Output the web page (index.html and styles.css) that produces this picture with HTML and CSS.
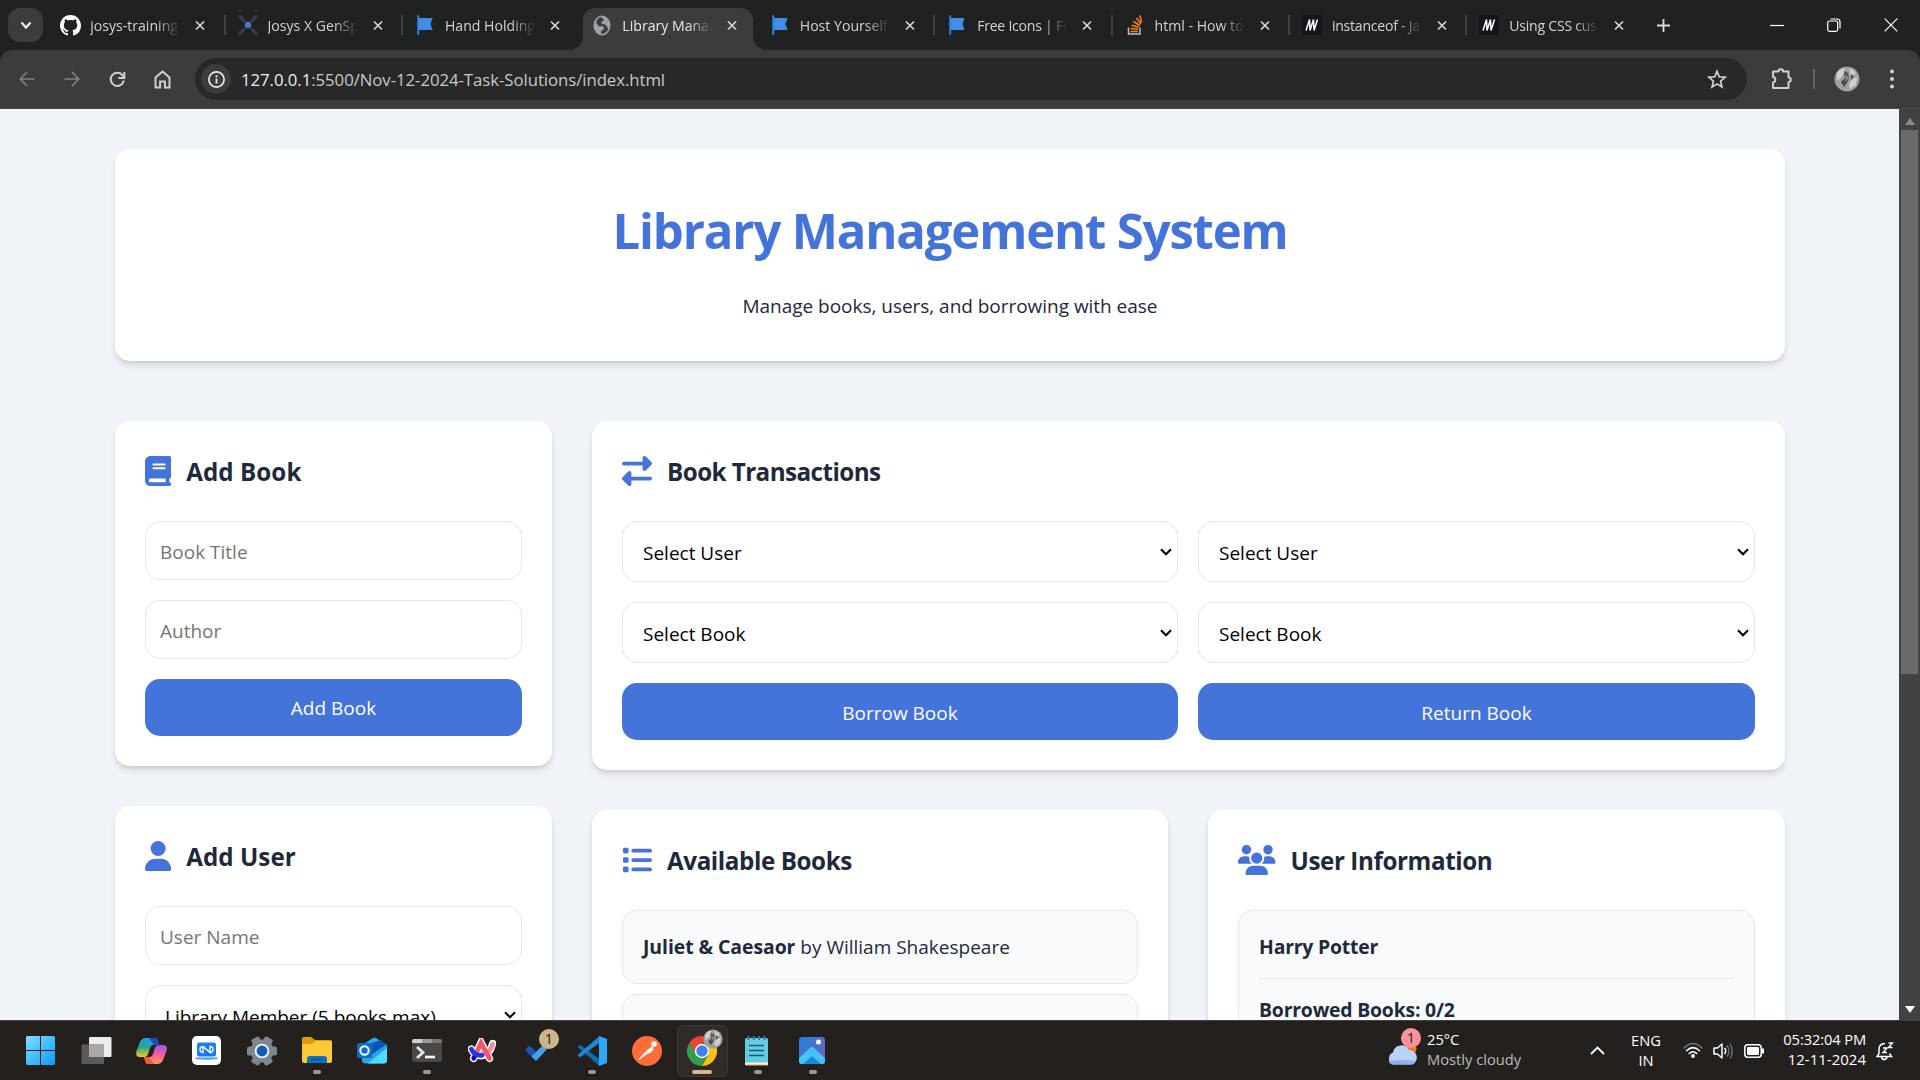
FILE: index.html
```
<!DOCTYPE html>
<html lang="en">
<head>
<meta charset="utf-8">
<title>Library Management System</title>
<link rel="stylesheet" href="styles.css">
</head>
<body>
<svg class="defs" width="0" height="0" aria-hidden="true">
  <defs>
    <symbol id="close" viewBox="0 0 10 10"><path d="M1 1l8 8M9 1l-8 8" fill="none" stroke="#d6d6d6" stroke-width="1.7"/></symbol>
    <symbol id="flag" viewBox="0 0 16 20"><path d="M1.2 1v18" stroke="#2f7fe0" stroke-width="2" stroke-linecap="round"/><path d="M2 3h13.5l-2 6 2 6H2z" fill="#3f8ee4"/></symbol>
    <symbol id="mdn" viewBox="0 0 20 20"><path d="M0 0h20v20H0z" fill="#14141c"/><path d="M4 15.5L7.500 4.500M8 15.500L11.500 4.500M12 15.500L15.500 4.500M7.500 4.500L8 15.500M11.500 4.500L12 15.500" stroke="#fff" stroke-width="1.500" fill="none"/></symbol>
    <symbol id="chev" viewBox="0 0 12 8"><path d="M1 1.200l5 5 5-5" fill="none" stroke="#000" stroke-width="2.100"/></symbol>
    <symbol id="face" viewBox="0 0 26 26"><circle cx="13" cy="13" r="12.500" fill="#a0a0a0"/><path d="M3 7q5-6 8-4l-3 8-5 4zM15 3q5 0 7 5l-5 1zM18 13l5-2-1 8-6 4-1-5z" fill="#cfcfcf"/><path d="M10 5l4 2 1 5-2 5-3 4-3-5 4-4zM17 8l3 3-3 3z" fill="#4a4a4a"/><path d="M12 8l3 4-4 4z" fill="#888"/></symbol>
  </defs>
</svg>

<header class="tabstrip">
  <button class="tab-search"><svg width="12" height="9" viewBox="0 0 12 9"><path d="M1.500 1.500L6 6.500l4.500-5" fill="none" stroke="#eee" stroke-width="2.200"/></svg></button>
  <div class="tab"><span class="fav"><svg width="21" height="21" viewBox="0 0 16 16"><path fill="#fff" d="M8 0C3.580 0 0 3.580 0 8c0 3.540 2.290 6.530 5.470 7.590.4.070.55-.17.55-.38 0-.19-.01-.82-.01-1.490-2.010.37-2.530-.49-2.690-.94-.09-.23-.48-.94-.82-1.130-.28-.15-.68-.52-.01-.53.63-.01 1.080.58 1.230.82.72 1.210 1.870.87 2.330.66.07-.52.28-.87.51-1.070-1.780-.2-3.640-.89-3.640-3.950 0-.87.31-1.590.82-2.150-.08-.2-.36-1.020.08-2.120 0 0 .67-.21 2.200.82.64-.18 1.320-.27 2-.27s1.360.09 2 .27c1.530-1.040 2.200-.82 2.200-.82.44 1.100.16 1.920.08 2.120.51.56.82 1.270.82 2.150 0 3.070-1.870 3.750-3.650 3.950.29.25.54.73.54 1.480 0 1.070-.01 1.930-.01 2.200 0 .21.15.46.55.38A8.010 8.010 0 0016 8c0-4.420-3.580-8-8-8z"/></svg></span><span class="tab-title">josys-training</span><svg class="x"><use href="#close"/></svg></div>
  <div class="tab sep"><span class="fav"><svg width="20" height="22" viewBox="0 0 20 22"><g stroke="#353b49" stroke-width="3.400" stroke-linecap="round"><path d="M2 2.500l4 4.500M18 2.500l-4 4.500M2 19.500l4-4.500M18 19.500l-4-4.500"/></g><circle cx="10" cy="11" r="3.200" fill="#4a78c8"/></svg></span><span class="tab-title">Josys X GenSp</span><svg class="x"><use href="#close"/></svg></div>
  <div class="tab sep"><span class="fav"><svg width="16" height="20"><use href="#flag"/></svg></span><span class="tab-title">Hand Holding</span><svg class="x"><use href="#close"/></svg></div>
  <div class="tab active"><span class="fav"><svg width="18" height="21" viewBox="0 0 20 20" preserveAspectRatio="none"><circle cx="10" cy="10" r="9.500" fill="#9aa2a9"/><path d="M9 2q-5 1-5.500 5.500L7 11l4-.500 1.500 2.500-3.500 2.500.500 2.500q6-1 7.500-5L13.500 9 10 8.500 9 6.500l3.500-1.500z" fill="#3c3c3c"/></svg></span><span class="tab-title">Library Manag</span><svg class="x"><use href="#close"/></svg></div>
  <div class="tab"><span class="fav"><svg width="16" height="20"><use href="#flag"/></svg></span><span class="tab-title">Host Yourself</span><svg class="x"><use href="#close"/></svg></div>
  <div class="tab sep"><span class="fav"><svg width="16" height="20"><use href="#flag"/></svg></span><span class="tab-title tight">Free Icons | Fo</span><svg class="x"><use href="#close"/></svg></div>
  <div class="tab sep"><span class="fav"><svg width="16" height="20" viewBox="0 0 16 20"><path d="M1.500 12.500V19h11.500v-6.500" fill="none" stroke="#bcbcbc" stroke-width="1.500"/><path d="M3.500 16.500h7.500M3.700 13.500l7.400.800M4.600 10.200l7.200 2M6.600 6.500l6.200 4M9.500 3l4.400 6M13 .500l1.500 7" stroke="#f48024" stroke-width="1.600"/></svg></span><span class="tab-title">html - How to</span><svg class="x"><use href="#close"/></svg></div>
  <div class="tab sep"><span class="fav"><svg width="20" height="20"><use href="#mdn"/></svg></span><span class="tab-title tight">instanceof - Ja</span><svg class="x"><use href="#close"/></svg></div>
  <div class="tab sep"><span class="fav"><svg width="20" height="20"><use href="#mdn"/></svg></span><span class="tab-title tight">Using CSS cus</span><svg class="x"><use href="#close"/></svg></div>
  <div class="newtab"><svg width="13" height="13" viewBox="0 0 13 13"><path d="M6.500 0v13M0 6.500h13" stroke="#ddd" stroke-width="1.800"/></svg></div>
  <div class="winctl">
    <span><svg width="14" height="14" viewBox="0 0 14 14"><path d="M0 7.500h14" stroke="#fff" stroke-width="1.200"/></svg></span>
    <span><svg width="14" height="14" viewBox="0 0 14 14"><rect x=".7" y="3" width="10" height="10.300" rx="1.800" fill="none" stroke="#fff" stroke-width="1.200"/><path d="M3.500 1h6.500a3 3 0 0 1 3 3v6.500" fill="none" stroke="#fff" stroke-width="1.200"/></svg></span>
    <span><svg width="14" height="14" viewBox="0 0 14 14"><path d="M.7.7l12.600 12.600M13.300.7L.7 13.300" stroke="#fff" stroke-width="1.200"/></svg></span>
  </div>
</header>

<nav class="toolbar">
  <div class="navbtns">
    <span><svg width="16" height="16" viewBox="0 0 16 16"><path d="M15.500 8H1.500M8 1L1.200 8 8 15" fill="none" stroke="#808080" stroke-width="1.700"/></svg></span>
    <span><svg width="16" height="16" viewBox="0 0 16 16"><path d="M.5 8h14M8 1l6.800 7L8 15" fill="none" stroke="#808080" stroke-width="1.700"/></svg></span>
    <span><svg width="17" height="17" viewBox="0 0 17 17"><path d="M14.800 9.500A6.600 6.600 0 1 1 13.600 4.400L15 6" fill="none" stroke="#d0d0d0" stroke-width="2"/><path d="M15.300 1v6h-6" fill="none" stroke="#d0d0d0" stroke-width="2"/></svg></span>
    <span><svg width="17" height="19" viewBox="0 0 17 19"><path d="M1.500 17.500V7.500l7-6 7 6v10h-4.600v-6H6.100v6z" fill="none" stroke="#d0d0d0" stroke-width="2"/></svg></span>
  </div>
  <div class="omnibox">
    <span class="info"><svg width="17" height="17" viewBox="0 0 17 17"><circle cx="8.500" cy="8.500" r="7.600" fill="none" stroke="#e8e8e8" stroke-width="1.700"/><path d="M8.500 7.500v5M8.500 4.200v2" stroke="#e8e8e8" stroke-width="1.800"/></svg></span>
    <span class="url"><b>127.0.0.1</b>:5500/Nov-12-2024-Task-Solutions/index.html</span>
    <svg width="20" height="20" viewBox="0 0 20 20"><path d="M10 2.300l2.200 5.500 5.800.5-4.400 3.900 1.300 5.700L10 14.900l-4.900 3 1.300-5.700L2 8.300l5.800-.5z" fill="none" stroke="#d4d4d4" stroke-width="1.700"/></svg>
  </div>
  <div class="tools">
    <svg width="22" height="24" viewBox="0 0 22 24"><path d="M2 4.500h5.500a2.300 2.300 0 0 1 4.600 0H17.500v6a2.300 2.300 0 0 1 0 4.600v6H2v-5.500a3 3 0 0 0 0-5.800z" fill="none" stroke="#cfcfcf" stroke-width="2" stroke-linejoin="round"/></svg>
    <i class="bar"></i>
    <svg width="26" height="26"><use href="#face"/></svg>
    <svg class="dots" width="6" height="20" viewBox="0 0 6 20"><g fill="#d4d4d4"><circle cx="3" cy="2.500" r="2"/><circle cx="3" cy="10" r="2"/><circle cx="3" cy="17.500" r="2"/></g></svg>
  </div>
</nav>

<div class="viewport">
  <main class="page">
    <section class="hero">
      <h1>Library Management System</h1>
      <p>Manage books, users, and borrowing with ease</p>
    </section>
    <div class="layout">
      <aside class="sidebar">
        <section class="card">
          <h2><svg width="26.250" height="30" viewBox="0 0 448 512"><path d="M96 0C43 0 0 43 0 96V416c0 53 43 96 96 96H384h32c17.700 0 32-14.300 32-32s-14.300-32-32-32V384c17.700 0 32-14.300 32-32V32c0-17.700-14.300-32-32-32H384 96zm0 384H352v64H96c-17.700 0-32-14.300-32-32s14.300-32 32-32zm32-240c0-8.800 7.200-16 16-16H336c8.800 0 16 7.200 16 16s-7.200 16-16 16H144c-8.800 0-16-7.200-16-16zm16 48H336c8.800 0 16 7.200 16 16s-7.200 16-16 16H144c-8.800 0-16-7.200-16-16s7.200-16 16-16z"/></svg><span>Add Book</span></h2>
          <div class="form">
            <input type="text" placeholder="Book Title">
            <input type="text" placeholder="Author">
            <button class="btn">Add Book</button>
          </div>
        </section>
        <section class="card">
          <h2><svg width="26.250" height="30" viewBox="0 0 448 512"><path d="M224 256A128 128 0 1 0 224 0a128 128 0 1 0 0 256zm-45.700 48C79.800 304 0 383.800 0 482.300C0 498.700 13.300 512 29.700 512H418.300c16.400 0 29.700-13.300 29.700-29.700C448 383.800 368.200 304 269.700 304H178.300z"/></svg><span>Add User</span></h2>
          <div class="form">
            <input type="text" placeholder="User Name">
            <div class="select"><select><option>Library Member (5 books max)</option></select><svg><use href="#chev"/></svg></div>
            <button class="btn">Add User</button>
          </div>
        </section>
      </aside>
      <div class="main">
        <section class="card wide">
          <h2><svg width="30" height="30" viewBox="0 0 512 512"><path d="M32 96l320 0V32c0-12.900 7.800-24.600 19.800-29.600s25.700-2.200 34.900 6.900l96 96c6 6 9.400 14.100 9.400 22.600s-3.400 16.600-9.400 22.600l-96 96c-9.200 9.200-22.900 11.900-34.900 6.900s-19.800-16.600-19.800-29.600V160L32 160c-17.700 0-32-14.300-32-32s14.300-32 32-32zM480 352c17.700 0 32 14.300 32 32s-14.300 32-32 32H160v64c0 12.900-7.800 24.600-19.800 29.600s-25.700 2.200-34.900-6.900l-96-96c-6-6-9.400-14.100-9.400-22.600s3.400-16.600 9.400-22.600l96-96c9.200-9.200 22.900-11.900 34.900-6.900s19.800 16.600 19.800 29.600l0 64H480z"/></svg><span>Book Transactions</span></h2>
          <div class="trans">
            <div class="form">
              <div class="select"><select><option>Select User</option></select><svg><use href="#chev"/></svg></div>
              <div class="select"><select><option>Select Book</option></select><svg><use href="#chev"/></svg></div>
              <button class="btn">Borrow Book</button>
            </div>
            <div class="form">
              <div class="select"><select><option>Select User</option></select><svg><use href="#chev"/></svg></div>
              <div class="select"><select><option>Select Book</option></select><svg><use href="#chev"/></svg></div>
              <button class="btn">Return Book</button>
            </div>
          </div>
        </section>
        <section class="card">
          <h2><svg width="30" height="30" viewBox="0 0 512 512"><rect x="16" y="48" width="96" height="96" rx="24"/><rect x="16" y="208" width="96" height="96" rx="24"/><rect x="16" y="368" width="96" height="96" rx="24"/><rect x="160" y="64" width="352" height="64" rx="32"/><rect x="160" y="224" width="352" height="64" rx="32"/><rect x="160" y="384" width="352" height="64" rx="32"/></svg><span class="mid">Available Books</span></h2>
          <ul class="books">
            <li><strong>Juliet &amp; Caesaor</strong> by William Shakespeare</li>
            <li></li>
          </ul>
        </section>
        <section class="card">
          <h2><svg width="37.500" height="30" viewBox="0 0 640 512"><path d="M144 0a80 80 0 1 1 0 160A80 80 0 1 1 144 0zM512 0a80 80 0 1 1 0 160A80 80 0 1 1 512 0zM0 298.700C0 239.800 47.800 192 106.700 192h42.700c15.900 0 31 3.500 44.600 9.700c-1.300 7.200-1.900 14.700-1.900 22.300c0 38.200 16.800 72.500 43.300 96H21.300C9.600 320 0 310.400 0 298.700zM405.300 320h-.7c26.600-23.500 43.300-57.800 43.300-96c0-7.600-.7-15-1.900-22.300c13.600-6.300 28.700-9.700 44.600-9.700h42.700C592.200 192 640 239.800 640 298.700c0 11.800-9.600 21.300-21.300 21.300H405.300zM224 224a96 96 0 1 1 192 0 96 96 0 1 1-192 0zM128 485.300C128 411.700 187.700 352 261.300 352H378.700C452.300 352 512 411.700 512 485.300c0 14.700-11.900 26.700-26.700 26.700H154.700c-14.700 0-26.700-11.900-26.700-26.700z"/></svg><span class="mid">User Information</span></h2>
          <div class="user">
            <strong>Harry Potter</strong>
            <hr>
            <strong>Borrowed Books: 0/2</strong>
          </div>
        </section>
      </div>
    </div>
  </main>
  <div class="scrollbar">
    <svg width="10" height="8" viewBox="0 0 10 8"><path d="M0 8l5-7 5 7z" fill="#8b8b8b"/></svg>
    <div class="track"><div class="thumb"></div></div>
    <svg width="10" height="8" viewBox="0 0 10 8"><path d="M0 0l5 7 5-7z" fill="#fff"/></svg>
  </div>
</div>

<footer class="taskbar">
  <div class="apps">
    <span class="app"><svg width="29" height="29" viewBox="0 0 29 29"><defs><linearGradient id="w" x1="0" y1="0" x2="1" y2="1" ><stop offset="0" stop-color="#7fe0ff"/><stop offset="1" stop-color="#0a9bfa"/></linearGradient></defs><path d="M1 0h13v14H0V1zM15 0h13l1 1v13H15zM0 15h14v14H1l-1-1zM15 15h14v13l-1 1H15z" fill="url(#w)"/></svg></span>
    <span class="app"><svg width="31" height="29" viewBox="0 0 31 29"><rect x="8" y="1" width="22.500" height="20" rx="1" fill="#ececec"/><rect x=".5" y="8.500" width="22.500" height="19.500" rx="1" fill="#5c5a59"/><path d="M8 8.500h15V21H8z" fill="#a9a8a8"/></svg></span>
    <span class="app"><svg width="31" height="28" viewBox="0 0 31 28"><defs><linearGradient id="c1" x1="0" y1="0" x2="0" y2="1"><stop offset="0" stop-color="#1c9ff0"/><stop offset=".5" stop-color="#2fa58c"/><stop offset="1" stop-color="#f5d11a"/></linearGradient><linearGradient id="c2" x1="0" y1="0" x2="0" y2="1"><stop offset="0" stop-color="#a353e8"/><stop offset=".5" stop-color="#f0609a"/><stop offset="1" stop-color="#fb9b4f"/></linearGradient></defs><path d="M10 1h9q2 0 2.500 2l1.500 5h-6q-2 0-3 3l-2 6q-1 3-4 3H4q-5 0-3.500-6L4 5q1.500-4 6-4z" fill="url(#c1)"/><path d="M13 1h6q2 0 2.500 2l1.500 5h-5z" fill="#1b49c9"/><path d="M21 27h-9q-2 0-2.500-2L8 20h6q2 0 3-3l2-6q1-3 4-3h4q5 0 3.500 6L27 23q-1.500 4-6 4z" fill="url(#c2)"/><path d="M18 27h-6q-2 0-2.500-2L8 20h5z" fill="#f4593c"/></svg></span>
    <span class="app"><svg width="29" height="29" viewBox="0 0 29 29"><rect width="29" height="29" rx="5" fill="#fff"/><rect x="5" y="6.500" width="19" height="14" rx="2" fill="#1a7cf5"/><path d="M3.500 21.500h22V23q-11 1.500-22 0z" fill="#3f9dfb"/><path d="M11 10.500L18 16.500V10.500q3 0 3 3t-3 3L11 10.500q-3 0-3 3t3 3v-6" fill="none" stroke="#fff" stroke-width="1.300"/></svg></span>
    <span class="app"><svg width="30" height="30" viewBox="0 0 30 30"><circle cx="15" cy="15" r="11.500" fill="#7c8691"/><g fill="#7c8691"><rect x="10.500" y="0" width="9" height="30" rx="2" transform="rotate(30 15 15)"/><rect x="10.500" y="0" width="9" height="30" rx="2" transform="rotate(90 15 15)"/><rect x="10.500" y="0" width="9" height="30" rx="2" transform="rotate(150 15 15)"/></g><circle cx="15" cy="15" r="7.300" fill="#f2f2f2"/><circle cx="15" cy="15" r="5.400" fill="#0d5fb5"/></svg></span>
    <span class="app run"><svg width="30" height="27" viewBox="0 0 30 27"><path d="M0 2q0-2 2-2h7l4 3h15q2 0 2 2v6H0z" fill="#dd9b08"/><path d="M0 7h10l3-3h17v20q0 2-2 2H2q-2 0-2-2z" fill="#fcc938"/><path d="M5 26v-4q0-3 3-3h14q3 0 3 3v4z" fill="#0c72c4"/><path d="M9 22.500h12" stroke="#064f92" stroke-width="1.200"/></svg></span>
    <span class="app"><svg width="30" height="27" viewBox="0 0 30 27"><path d="M5 8L16 1q1.500-1 3 0l11 7v15q0 3.500-3.500 3.500H8.500Q5 26.500 5 23z" fill="#2aa3ee"/><path d="M9 8l15-5 5 5-15 10z" fill="#0a55b5"/><path d="M14 24L30 11v12q0 3.500-3.500 3.500H11z" fill="#4fdcf9"/><rect y="6" width="15" height="15" rx="2" fill="#0f6cc9"/><circle cx="7.500" cy="13.500" r="4.200" fill="none" stroke="#fff" stroke-width="2"/></svg></span>
    <span class="app run"><svg width="30" height="23" viewBox="0 0 30 23"><rect width="30" height="23" rx="2" fill="#484848"/><path d="M0 4V2q0-2 2-2h8v4z" fill="#cfcfcf"/><path d="M10 0h10v4H10z" fill="#9a9a9a"/><path d="M20 0h8q2 0 2 2v2H20z" fill="#777"/><path d="M5 8l6 5.500L5 19" fill="none" stroke="#e6e6e6" stroke-width="2.800"/><path d="M13 18h10" stroke="#fff" stroke-width="2.600"/></svg></span>
    <span class="app"><svg width="28" height="25" viewBox="0 0 30 27"><g fill="none" stroke-linecap="round"><path d="M6 22L14 5l9 17M3.500 12q4 8 12 7t11-13" stroke="#fff" stroke-width="8"/><path d="M15 18.500q9-3 11.500-12" stroke="#fb8a94" stroke-width="5"/><path d="M6 22l3-6" stroke="#2200aa" stroke-width="5"/><path d="M9 16l5-10.500 9 16.500" stroke="#f5556a" stroke-width="5.200"/><path d="M3.500 12q4 8 11.500 6.500" stroke="#2233ee" stroke-width="5"/></g></svg></span>
    <span class="app"><svg width="26" height="22" viewBox="0 0 26 22"><path d="M1 10l4.500-4.500 8 8L9 18z" fill="#1f52b8"/><path d="M7.500 16.500L22 2l4 4-14 15z" fill="#42a0ee"/></svg><em class="badge">1</em></span>
    <span class="app run"><svg width="30" height="30" viewBox="0 0 30 30"><path d="M3 8.500L22 23v6.500L.5 11z" fill="#0e6db5"/><path d="M3 21.500L22 7V.5L.5 19z" fill="#1b8ad6"/><path d="M22 0l8 3v24l-8 3z" fill="#2aa9f5"/></svg></span>
    <span class="app"><svg width="30" height="30" viewBox="0 0 30 30"><circle cx="15" cy="15" r="15" fill="#ff6c37"/><circle cx="22" cy="8" r="2.800" fill="#fff"/><path d="M20.500 10.500l-6.500 5-7 8 8-6 3-1 3-3z" fill="#fff" stroke="#fff" stroke-width="1"/></svg></span>
    <span class="app run current"><svg width="30" height="30" viewBox="0 0 30 30"><path d="M15 15L2 7.500A15 15 0 0 0 15 30l6.500-11.300z" fill="#2f9e4f"/><path d="M15 15h-1L28 7.500A15 15 0 0 1 15 30l6.500-11.200z" fill="#fbc116"/><path d="M15 7.500h13A15 15 0 0 0 2 7.500l7 11z" fill="#ea4335"/><circle cx="15" cy="15" r="7.200" fill="#fff"/><circle cx="15" cy="15" r="5.700" fill="#3f7ff0"/></svg><svg class="mini" width="20" height="20" viewBox="0 0 26 26"><use href="#face"/></svg></span>
    <span class="app run"><svg width="23" height="30" viewBox="0 0 23 30"><rect y="2" width="23" height="27" rx="1.500" fill="#64cbe2"/><path d="M0 26.500h23V30H0z" fill="#f3efe9"/><path d="M0 28.800h23V30H0z" fill="#b0601e"/><path d="M4 9.500h15M4 14.500h15M4 19.500h15" stroke="#0f5c77" stroke-width="1.700"/><path d="M3.500 0v4M8.800 0v4M14.100 0v4M19.500 0v4" stroke="#1d84a0" stroke-width="2"/></svg></span>
    <span class="app run"><svg width="26" height="27" viewBox="0 0 26 27"><defs><linearGradient id="p" x1="0" y1="0" x2="1" y2="1"><stop offset="0" stop-color="#1b86e0"/><stop offset="1" stop-color="#8158b8"/></linearGradient></defs><rect width="26" height="27" rx="3" fill="url(#p)"/><path d="M0 21l11-10q2-2 4 0l11 10v3q0 3-3 3H3q-3 0-3-3z" fill="#43c5f6"/><path d="M4 27l9-8 9 8z" fill="#168ae0"/><circle cx="19.500" cy="5" r="2.500" fill="#fff"/></svg></span>
  </div>
  <div class="weather">
    <div class="cloud"><svg width="31" height="24" viewBox="0 0 31 24"><circle cx="24" cy="7" r="5.500" fill="#f07c1c"/><path d="M6 22.500a6.500 6.500 0 0 1 0-12A8.500 8.500 0 0 1 22 8a7.500 7.500 0 0 1 3 14.500z" fill="#b9d2f8"/><path d="M1.500 19q13-2 27 0-1 3.500-4 3.500H6q-3 0-4.500-3.500z" fill="#8fb1ec"/></svg><em class="badge pink">1</em></div>
    <div class="lines"><span>25°C</span><span class="dim">Mostly cloudy</span></div>
  </div>
  <svg class="up" width="15" height="9" viewBox="0 0 15 9"><path d="M1 8l6.500-6.500L14 8" fill="none" stroke="#fff" stroke-width="1.800"/></svg>
  <div class="lines lang"><span>ENG</span><span>IN</span></div>
  <div class="tray">
    <svg width="20" height="17" viewBox="0 0 20 17"><g fill="none" stroke-linecap="round" stroke-width="1.500"><path d="M1 6q9-9 18 0" stroke="#777"/><path d="M3.500 8.800q6.500-6.300 13 0M6.200 11.500q3.800-3.600 7.600 0" stroke="#fff"/></g><circle cx="10" cy="14" r="1.900" fill="#fff"/></svg>
    <svg width="21" height="18" viewBox="0 0 21 18"><path d="M1 6h3.500L9 2v14l-4.500-4H1z" fill="none" stroke="#fff" stroke-width="1.500" stroke-linejoin="round"/><path d="M11.500 6q2.500 3 0 6" fill="none" stroke="#fff" stroke-width="1.500"/><path d="M14 3.500q4 5.500 0 11M17 1.500q4.500 7.500 0 15" fill="none" stroke="#777" stroke-width="1.300"/></svg>
    <svg width="21" height="14" viewBox="0 0 21 14"><rect x=".8" y=".8" width="16.400" height="12.400" rx="3" fill="none" stroke="#fff" stroke-width="1.500"/><rect x="3" y="3" width="12" height="8" rx="1" fill="#fff"/><path d="M19 4.500v5" stroke="#fff" stroke-width="2"/></svg>
  </div>
  <div class="lines clock"><span class="time">05:32:04 PM</span><span class="date">12-11-2024</span></div>
  <svg class="bell" width="18" height="20" viewBox="0 0 18 20"><path d="M9 2.500Q3 3 3 8v4.500L1 15.500h14.500l-2-3M5.500 16q.5 2.500 2.700 2.500T11 16" fill="none" stroke="#fff" stroke-width="1.500"/><path d="M7 7h4l-4 4.500h4M12.500 2h4l-4 4.500h4" fill="none" stroke="#fff" stroke-width="1.400"/></svg>
</footer>
</body>
</html>
```
FILE: styles.css
```
* { box-sizing: border-box; margin: 0; padding: 0; }
html, body { height: 100%; overflow: hidden; }
body {
  display: flex; flex-direction: column;
  width: 1920px; height: 1080px;
  font-family: "Open Sans", "Noto Sans", sans-serif;
  font-size: 19px; line-height: 32px;
  color: #1e293b; background: #202221;
}
svg { display: block; flex: none; }
.defs { position: absolute; }
em, i { font-style: normal; }

/* Tab strip */
.tabstrip { display: flex; height: 50px; padding-left: 8px; background: #202221; flex: none; }
.tab-search { width: 35px; height: 34px; margin: 8px 4.200px 0 0; border: 0; border-radius: 12px; background: #3c3c3c; display: grid; place-items: center; }
.tab { position: relative; display: flex; align-items: center; width: 177.400px; flex: none; padding-left: 10px; font-size: 14.100px; line-height: 20px; color: #d2d2d2; }
.fav { width: 26px; margin-right: 7px; display: grid; place-items: center; }
.tab-title { width: 90px; padding-top: 1px; overflow: hidden; white-space: nowrap; -webkit-mask-image: linear-gradient(90deg, #000 66px, transparent 90px); mask-image: linear-gradient(90deg, #000 66px, transparent 90px); }
.tight { letter-spacing: -.25px; }
.x { width: 10px; height: 11px; margin-left: 15px; }
.sep::before { content: ""; position: absolute; left: -1px; top: 15px; width: 2px; height: 20px; background: #3f4140; }
.tab.active { width: 169.400px; margin: 8px 4px 0; padding: 0 0 8px 6px; border-radius: 12px 12px 0 0; background: #3c3c3c; color: #e8e8e8; }
.active::before, .active::after { content: ""; position: absolute; bottom: 0; width: 13px; height: 13px; }
.active::before { left: -13px; background: radial-gradient(circle at 0 0, transparent 12.500px, #3c3c3c 13px); }
.active::after { right: -13px; background: radial-gradient(circle at 100% 0, transparent 12.500px, #3c3c3c 13px); }
.newtab { width: 39px; display: grid; place-items: center; }
.winctl { display: flex; margin-left: auto; padding-right: 1px; }
.winctl span { width: 57px; display: grid; place-items: center; }

/* Toolbar */
.toolbar { display: flex; align-items: center; height: 59px; background: #3c3c3c; border-radius: 12px 12px 0 0; border-bottom: 1px solid #4a4a4a; flex: none; }
.navbtns { display: flex; width: 195px; padding-left: 4.500px; }
.navbtns span { width: 45px; display: grid; place-items: center; }
.omnibox { display: flex; align-items: center; width: 1552px; height: 42px; padding: 0 20px 0 6px; border-radius: 21px; background: #282828; }
.info { width: 30px; height: 30px; border-radius: 50%; background: #3c3c3c; display: grid; place-items: center; }
.url { flex: 1; padding: 1px 0 0 10px; font-size: 16.750px; letter-spacing: -.05px; color: #c9c9c9; }
.url b { font-weight: 400; color: #eee; }
.tools { display: flex; align-items: center; padding-left: 24px; }
.bar { width: 2px; height: 20px; margin: 0 19px 0 20px; background: #626262; }
.dots { margin-left: 29px; }

/* Viewport */
.viewport { display: flex; height: 911px; flex: none; overflow: hidden; }
.page { flex: 1; height: 911px; overflow: hidden; padding: 40px 114px 0 115px; background: #f0f4f9; }
.hero, .card { background: #fff; border-radius: 15px; box-shadow: 0 5px 7.500px -1px rgba(0, 0, 0, .13), 0 2px 4px -1px rgba(0, 0, 0, .06); }
.hero { height: 212px; padding: 41px 40px 39px; text-align: center; margin-bottom: 60px; }
.hero p { letter-spacing: -.03px; }
h1 { margin-bottom: 20px; font-size: 49px; line-height: 81px; height: 80px; letter-spacing: -1.130px; color: #4473d9; }
.layout { display: flex; align-items: flex-start; gap: 40px; }
.sidebar { width: 437px; display: flex; flex-direction: column; gap: 40px; flex: none; }
.main { flex: 1; display: grid; grid-template-columns: 576px 1fr; gap: 40px; align-items: start; }
.wide { grid-column: span 2; }
.card { padding: 30px; }
h2 { display: flex; align-items: center; gap: 15px; height: 40px; margin-bottom: 30px; font-size: 24.200px; letter-spacing: -.55px; }
h2 span { padding-top: 1px; }
.sidebar h2 { letter-spacing: .05px; }
h2 .mid { letter-spacing: -.400px; }
h2 svg { fill: #4473d9; }
.form { display: flex; flex-direction: column; gap: 20px; }
.trans { display: grid; grid-template-columns: 556px 1fr; gap: 20px; }
input, select { display: block; width: 100%; border: 1px solid #e2e8f0; border-radius: 15px; background: #fff; font: inherit; }
input { height: 58.750px; padding: 3px 15px 0 14px; }
input::placeholder { color: #757575; opacity: 1; }
select { height: 61px; padding: 2px 20px 0; color: #000; appearance: none; }
.sidebar select { padding: 3px 20px 0 19px; }
.select { display: grid; align-items: center; }
.select > * { grid-area: 1 / 1; }
.select svg { width: 12px; height: 8px; justify-self: end; margin: 0 6px 0 0; }
.btn { height: 57px; padding-top: 2px; border: 0; border-radius: 15px; background: #4473d9; color: #fff; font: inherit; }
.sidebar .btn { height: 57.500px; }
.books { list-style: none; display: flex; flex-direction: column; gap: 10px; }
.books li, .user { padding: 20px; border: 1px solid #e2e8f0; border-radius: 15px; background: #f8fafc; }
.books li { height: 74px; }
strong { font-size: 19.400px; letter-spacing: -.2px; }
.books strong { letter-spacing: -.05px; }
.user { height: 200px; display: flex; flex-direction: column; }
.user hr { border: 0; height: 1px; margin: 15px 0; background: #e2e8f0; flex: none; }

/* Page scrollbar */
.scrollbar { width: 21px; background: #424242; display: flex; flex-direction: column; align-items: center; padding: 8px 0 6px; }
.track { flex: 1; padding-top: 5px; }
.thumb { width: 17px; height: 544px; background: #696969; }

/* Taskbar */
.taskbar { display: flex; align-items: center; height: 60px; border-top: 1px solid #45413e; background: #24201d; color: #fff; padding-left: 13px; flex: none; }
.apps { display: flex; width: 1374px; }
.app { position: relative; width: 55.100px; height: 59px; display: grid; place-items: center; }
.app:nth-child(n+2):nth-child(-n+11) { padding-left: 2px; }
.run::after { content: ""; position: absolute; left: 24.500px; bottom: 6px; width: 8px; height: 4px; border-radius: 2px; background: #9a9896; }
.current::before { content: ""; position: absolute; left: 3px; top: 4px; width: 49px; height: 50px; border: 1px solid #3e3936; border-radius: 6px; background: #302b28; }
.current svg { position: relative; }
.current::after { left: 17.500px; width: 20px; background: #d3b98d; }
.current .mini { position: absolute; right: 6px; top: 8px; }
.badge { position: absolute; left: 30px; top: 8px; width: 20px; height: 20px; border-radius: 50%; background: #cbb48a; color: #222; font-size: 14.500px; line-height: 20px; text-align: center; }
.weather { display: flex; align-items: center; width: 203px; gap: 9px; }
.cloud { position: relative; padding-top: 6px; }
.pink { left: 14px; top: -8px; background: #fb929b; }
.lines { display: flex; flex-direction: column; padding-bottom: 3px; font-size: 14.700px; line-height: 20px; white-space: nowrap; }
.dim { color: #bdbbb9; }
.lang { width: 54px; align-items: center; margin-left: 14px; padding-bottom: 1px; }
.tray { display: flex; align-items: center; gap: 10px; margin-left: 10px; width: 80px; }
.clock { width: 103px; align-items: flex-end; }
.time { letter-spacing: -.12px; }
.date { font-size: 15px; }
.bell { margin-left: 10px; }
```
